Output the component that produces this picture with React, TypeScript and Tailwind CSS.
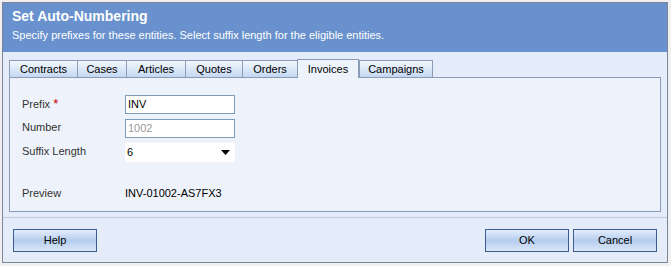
const tabs = ['Contracts', 'Cases', 'Articles', 'Quotes', 'Orders', 'Invoices', 'Campaigns'];
const tabWidths = [68, 49, 59, 57, 55, 62, 74];

function Field({ label, required, children }: { label: string; required?: boolean; children: React.ReactNode }) {
  return (
    <div className="flex items-center h-[24px]">
      <div className="w-[103px] -mt-px">
        <span className="text-[#333]">{label}</span>
        {required && <span className="text-[#c00000] ml-[3px] text-[13px]">*</span>}
      </div>
      {children}
    </div>
  );
}

function Button({ label }: { label: string }) {
  return (
    <button className="h-[23px] w-[84px] border border-[#3c5d91] bg-gradient-to-b from-[#e4eefb] via-[#b5cdee] to-[#dbe7f8] text-[11px] text-black">
      {label}
    </button>
  );
}

export default function App() {
  return (
    <div className="w-[671px] h-[266px] bg-[#f0f0f0] pt-[2px] pl-[2px] font-['Liberation_Sans',sans-serif] text-[11px] text-black">
      <div className="w-[666px] h-[261px] border border-[#7a8597] bg-[#e3ecf8] flex flex-col">
        <div className="h-[49px] bg-[#6891cd] px-[9px] pt-[5px] text-white">
          <div className="font-bold text-[14px] leading-[17px]">Set Auto-Numbering</div>
          <div className="mt-[3px] text-[11px] leading-[14px]">
            Specify prefixes for these entities. Select suffix length for the eligible entities.
          </div>
        </div>
        <div className="px-[6px] pt-[7px]">
          <div className="flex h-[19px]">
            {tabs.map((t, i) => (
              <div
                key={t}
                style={{ width: tabWidths[i] }}
                className={
                  t === 'Invoices'
                    ? 'h-[19px] border border-b-0 border-[#8a9bb5] bg-[#eef3fb] flex items-center justify-center text-black relative z-10'
                    : 'h-[18px] mt-[1px] border border-r-0 border-[#8a9bb5] bg-gradient-to-b from-[#f3f7fd] to-[#c5d8f1] flex items-center justify-center text-black last:border-r'
                }
              >
                {t}
              </div>
            ))}
          </div>
          <div className="h-[135px] -mt-px border border-[#8a9bb5] bg-[#eef3fb] pl-[12px] pt-[14px]">
            <Field label="Prefix" required>
              <div className="w-[110px] h-[19px] border border-[#7f9db9] bg-white px-[2px] leading-[17px]">INV</div>
            </Field>
            <Field label="Number">
              <div className="w-[110px] h-[19px] border border-[#7f9db9] bg-white px-[2px] leading-[17px] text-[#999]">1002</div>
            </Field>
            <Field label="Suffix Length">
              <div className="w-[110px] h-[19px] bg-white px-[2px] flex items-center justify-between">
                <span>6</span>
                <svg width="9" height="5" viewBox="0 0 9 5" className="mr-[3px]">
                  <path d="M0 0H9L4.5 5Z" fill="#000" />
                </svg>
              </div>
            </Field>
            <div className="mt-[18px]">
              <Field label="Preview">
                <span className="-mt-px">INV-01002-AS7FX3</span>
              </Field>
            </div>
          </div>
        </div>
        <div className="mt-[5px] border-t border-[#c0cde0]" />
        <div className="flex justify-between px-[10px] pt-[11px]">
          <Button label="Help" />
          <div className="flex gap-[4px]">
            <Button label="OK" />
            <Button label="Cancel" />
          </div>
        </div>
      </div>
    </div>
  );
}
